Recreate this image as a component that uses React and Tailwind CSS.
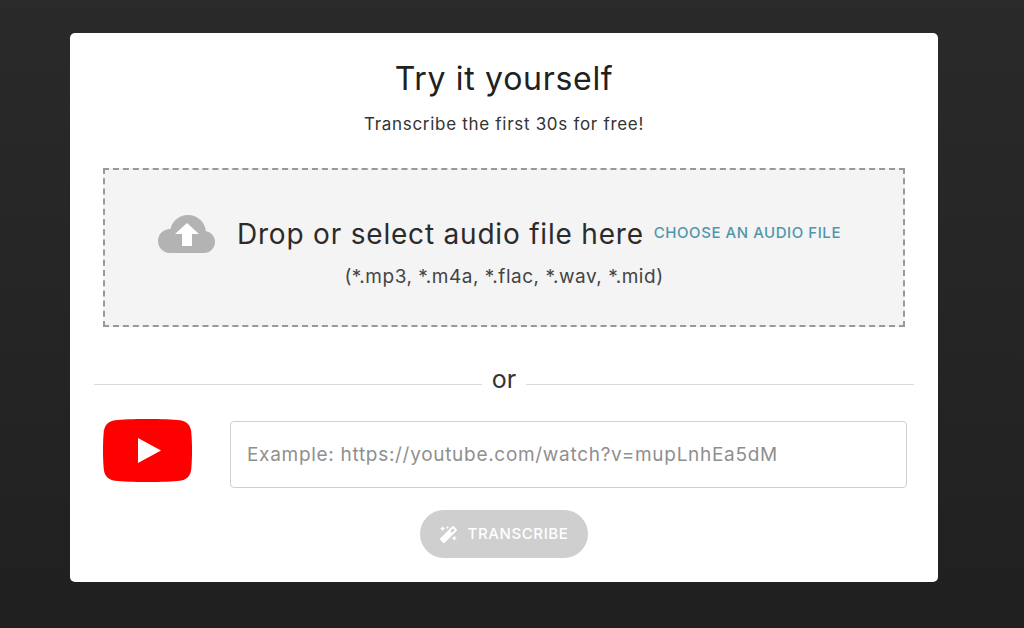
import { FaMagic } from "react-icons/fa";

function CloudIcon() {
  return (
    <svg className="w-[57px] h-[38px] shrink-0 mr-[22px]" viewBox="0 0 57 38" aria-hidden="true">
      <g fill="#b3b3b3">
        <circle cx="12" cy="26" r="12" />
        <circle cx="30" cy="18" r="18" />
        <circle cx="46" cy="27" r="11" />
        <rect x="12" y="20" width="34" height="18" />
      </g>
      <path fill="#ffffff" d="M29 8 41 19H34V31H24V19H17Z" />
    </svg>
  );
}

function YoutubeLogo() {
  return (
    <svg className="w-[89px] h-[63px] shrink-0" viewBox="0 0 89 63" aria-hidden="true">
      <path
        fill="#ff0000"
        d="M44.5 0C30 0 19 .4 12 1.200 5.500 2 1.600 6 .8 12.500-.3 24-.3 39 .8 50.500 1.600 57 5.500 61 12 61.800 19 62.600 30 63 44.500 63S70 62.600 77 61.800C83.500 61 87.400 57 88.200 50.500 89.300 39 89.300 24 88.200 12.500 87.400 6 83.500 2 77 1.200 70 .4 59 0 44.500 0Z"
      />
      <path fill="#ffffff" d="M35 19 58 31.500 35 44Z" />
    </svg>
  );
}

export default function App() {
  return (
    <div className="min-h-screen h-[628px] overflow-hidden bg-gradient-to-b from-[#2a2a2a] to-[#202020] pt-[33px] pl-[70px] font-['Inter',sans-serif]">
      <div className="w-[868px] h-[549px] bg-white rounded-[5px] flex flex-col items-center">
        <h1 className="mt-[23px] text-[32px] leading-[46px] tracking-[0.7px] font-normal text-[#212121]">Try it yourself</h1>
        <p className="mt-[9px] text-[17px] leading-[26px] tracking-[0.7px] text-[#333333]">Transcribe the first 30s for free!</p>

        <div className="mt-[31px] w-[802px] h-[159px] pt-[8px] bg-[#f4f4f4] border-2 border-dashed border-[#999999] flex flex-col items-center justify-center">
          <div className="flex items-center pr-[9px]">
            <CloudIcon />
            <span className="text-[28px] leading-[40px] tracking-[0.8px] text-[#2b2b2b]">Drop or select audio file here</span>
            <span className="ml-[10px] text-[15px] font-medium tracking-[0.55px] text-[#4f97ad] uppercase">Choose an audio file</span>
          </div>
          <p className="mt-[9px] text-[19px] leading-[27px] tracking-[0.53px] text-[#444444]">(*.mp3, *.m4a, *.flac, *.wav, *.mid)</p>
        </div>

        <div className="mt-[35px] w-[820px] flex items-start">
          <div className="flex-1 h-px mt-[22px] bg-[#d9d9d9]"></div>
          <span className="px-[10px] text-[25px] leading-[35px] text-[#333333]">or</span>
          <div className="flex-1 h-px mt-[22px] bg-[#d9d9d9]"></div>
        </div>

        <div className="mt-[22px] ml-[33px] w-[804px] self-start flex items-start gap-[38px]">
          <YoutubeLogo />
          <input
            readOnly
            placeholder="Example: https://youtube.com/watch?v=mupLnhEa5dM"
            className="mt-[2px] w-[677px] h-[67px] px-[16px] border border-[#cfcfcf] rounded-[4px] text-[19px] tracking-[0.7px] text-[#333333] placeholder:text-[#8f8f8f] outline-none"
          />
        </div>

        <button className="mt-[22px] w-[168px] h-[48px] rounded-full bg-[#cfcfcf] flex items-center justify-center gap-[11px] text-white text-[15px] tracking-[0.6px] font-medium uppercase">
          <FaMagic className="w-[17px] h-[17px]" />
          Transcribe
        </button>
      </div>
    </div>
  );
}
